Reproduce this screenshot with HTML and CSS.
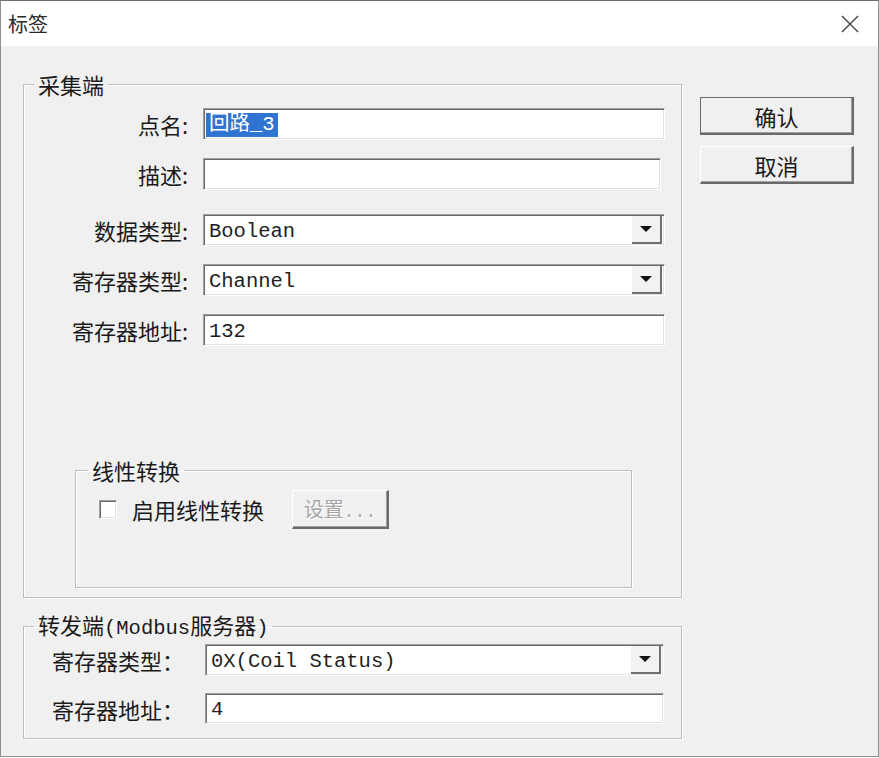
FILE: index.html
```html
<!DOCTYPE html>
<html lang="zh-CN">
<head>
  <meta charset="UTF-8">
  <meta name="viewport" content="width=device-width, initial-scale=1.0">
  <title>标签</title>
  <link rel="stylesheet" href="styles.css">
</head>
<body>
  <div class="window">
    <div class="titlebar">
      <span class="title">标签</span>
      <svg class="close" width="18" height="18" viewBox="0 0 18 18">
        <path d="M1 1L17 17M17 1L1 17" stroke="#3c3c3c" stroke-width="1.3" fill="none"/>
      </svg>
    </div>

    <div class="dialog-body">
      <div class="main-col">
        <fieldset class="group group-source">
          <legend>采集端</legend>

          <div class="form-row">
            <label>点名:</label>
            <div class="field"><span class="selected">回路_3</span></div>
          </div>
          <div class="form-row">
            <label>描述:</label>
            <div class="field field-short"></div>
          </div>
          <div class="form-row row-wide">
            <label>数据类型:</label>
            <div class="field select">
              <span class="value">Boolean</span>
              <span class="drop-btn"><span class="tri"></span></span>
            </div>
          </div>
          <div class="form-row">
            <label>寄存器类型:</label>
            <div class="field select">
              <span class="value">Channel</span>
              <span class="drop-btn"><span class="tri"></span></span>
            </div>
          </div>
          <div class="form-row">
            <label>寄存器地址:</label>
            <div class="field"><span class="value">132</span></div>
          </div>

          <fieldset class="group group-linear">
            <legend>线性转换</legend>
            <div class="check-row">
              <span class="checkbox"></span>
              <span class="check-label">启用线性转换</span>
              <button class="btn btn-setup" disabled>设置<span class="latin">...</span></button>
            </div>
          </fieldset>
        </fieldset>

        <fieldset class="group group-target">
          <legend>转发端<span class="latin">(Modbus</span>服务器<span class="latin">)</span></legend>
          <div class="form-row">
            <label>寄存器类型：</label>
            <div class="field select">
              <span class="value">0X(Coil Status)</span>
              <span class="drop-btn"><span class="tri"></span></span>
            </div>
          </div>
          <div class="form-row row-short">
            <label>寄存器地址：</label>
            <div class="field"><span class="value">4</span></div>
          </div>
        </fieldset>
      </div>

      <div class="side-col">
        <button class="btn btn-default">确认</button>
        <button class="btn">取消</button>
      </div>
    </div>
  </div>
</body>
</html>
```

FILE: styles.css
```css
* {
  box-sizing: border-box;
}

body {
  margin: 0;
  background: #ffffff;
  font-family: "Noto Sans CJK SC", sans-serif;
  color: #1a1a1a;
}

.window {
  width: 879px;
  height: 757px;
  border: 1px solid #8f8f8f;
  border-top-color: #6f6f6f;
  background: #f0f0f0;
  display: flex;
  flex-direction: column;
}

.titlebar {
  height: 45px;
  background: #fff;
  display: flex;
  align-items: center;
  justify-content: space-between;
  padding: 0 19px 0 7px;
}

.title {
  font-size: 20px;
  color: #2a2a2a;
}

.dialog-body {
  display: flex;
  gap: 18px;
  padding: 24px 0 0 22px;
}

.main-col {
  width: 659px;
}

/* group boxes */
fieldset.group {
  margin: 0;
  min-width: 0;
  border: 1px solid #bdbdbd;
  box-shadow: inset 1px 1px 0 #fff, 1px 1px 0 #fff;
  padding: 10px 16px 9px 0;
}

fieldset.group legend {
  font-size: 22px;
  line-height: 28px;
  padding: 0 4px;
  margin-left: 10px;
  color: #1a1a1a;
}

fieldset.group-linear {
  margin: 110px 0 0 51px;
  width: 557px;
  padding: 5px 0 58px 23px;
}

fieldset.group-linear legend {
  margin-left: -11px;
}

fieldset.group-target {
  margin-top: 12px;
  padding: 1px 17px 14px 0;
}

.latin {
  font-family: "Liberation Mono", monospace;
  font-size: 20.5px;
}

/* rows */
.form-row {
  display: flex;
  align-items: center;
  gap: 15px;
  height: 32px;
}

.form-row + .form-row {
  margin-top: 18px;
}

.form-row.row-wide {
  margin-top: 24px;
}

.form-row label {
  width: 164px;
  text-align: right;
  font-size: 22px;
  line-height: 32px;
  white-space: nowrap;
}

.group-target .form-row {
  gap: 0;
}

.group-target .form-row + .form-row {
  margin-top: 17px;
}

.group-target .form-row.row-short {
  height: 31px;
}

.group-target .form-row label {
  width: 181px;
  padding-left: 28px;
  text-align: left;
}

/* sunken fields */
.field {
  flex: 1;
  height: 100%;
  background: #fff;
  border: 1px solid;
  border-color: #a0a0a0 #fff #fff #a0a0a0;
  box-shadow: inset 1px 1px 0 #6a6a6a, inset -1px -1px 0 #e3e3e3;
  display: flex;
  align-items: center;
  padding: 2px 0 0 5px;
  font-family: "Liberation Mono", "Noto Sans CJK SC", monospace;
  font-size: 20.5px;
  color: #1e1e1e;
}

.field-short {
  margin-right: 4px;
}

.selected {
  background: #2f74d0;
  color: #fff;
  padding: 0 3px;
  margin-left: -3px;
  line-height: 24px;
}

.select {
  justify-content: space-between;
  padding-right: 2px;
  padding-top: 0;
}

.select .value {
  padding-top: 2px;
}

.drop-btn {
  width: 30px;
  height: 28px;
  background: #f2f2f2;
  border-right: 2px solid #707070;
  border-bottom: 2px solid #707070;
  display: flex;
  align-items: center;
  justify-content: center;
}

.tri {
  width: 0;
  height: 0;
  border-left: 6px solid transparent;
  border-right: 6px solid transparent;
  border-top: 6px solid #111;
}

/* checkbox row */
.check-row {
  display: flex;
  align-items: center;
  height: 40px;
}

.checkbox {
  width: 18px;
  height: 19px;
  background: #fff;
  border: 1px solid;
  border-color: #a0a0a0 #fff #fff #a0a0a0;
  box-shadow: inset 1px 1px 0 #6a6a6a, inset -1px -1px 0 #e3e3e3;
  margin-right: 15px;
}

.check-label {
  font-size: 22px;
}

/* buttons */
.btn {
  font-family: "Noto Sans CJK SC", sans-serif;
  font-size: 22px;
  color: #1a1a1a;
  background: #f0f0f0;
  border: 1px solid;
  border-color: #fff #6a6a6a #6a6a6a #fff;
  border-right-width: 2px;
  border-bottom-width: 2px;
  box-shadow: inset -1px -1px 0 #a0a0a0;
  padding: 0;
}

.btn-setup {
  width: 97px;
  height: 39px;
  margin-left: 28px;
  font-size: 20px;
  color: #a6a6a6;
  text-shadow: 1px 1px 0 #fff;
}

.btn-setup .latin {
  font-size: 18px;
}

.side-col {
  padding-top: 27px;
  display: flex;
  flex-direction: column;
  gap: 11px;
}

.side-col .btn {
  width: 154px;
  height: 38px;
}

.btn-default {
  outline: 1px solid #6a6a6a;
  outline-offset: -1px;
  border-color: #e8e8e8 #6a6a6a #6a6a6a #6a6a6a;
}
```
